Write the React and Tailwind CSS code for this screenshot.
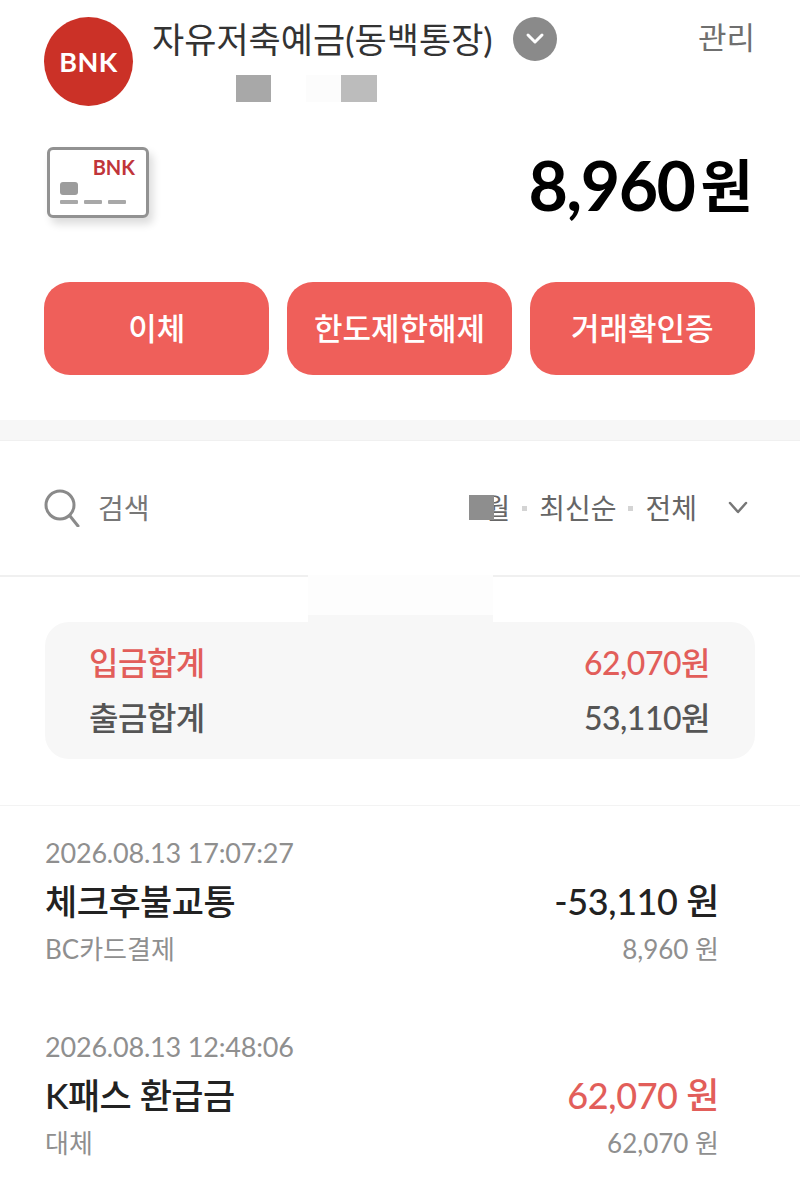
const font = { fontFamily: '"Lato", "Noto Sans CJK KR", sans-serif' };

function BnkMark({ className }) {
  // BNK wordmark, kept as real text
  return (
    <span className={`font-bold leading-none ${className}`}>BNK</span>
  );
}

function ActionButton({ label }) {
  return (
    <button className="flex h-[93px] flex-1 items-center justify-center rounded-[26px] bg-[#ef5f5a] text-[31px] font-medium text-white">
      {label}
    </button>
  );
}

function Transaction({ time, title, amount, amountColor, method, balance }) {
  return (
    <div className="h-[194px] px-[45px] pt-[30px]">
      <div className="text-[27px] leading-[34px] tracking-[-0.2px] text-[#8f8f8f]">{time}</div>
      <div className="mt-[9px] flex items-center justify-between pr-[36px]">
        <span className="text-[35px] leading-[44px] font-medium tracking-[-0.5px] text-[#222222]">{title}</span>
        <span className={`text-[36px] leading-[44px] font-medium tracking-[-0.4px] ${amountColor}`}>{amount}</span>
      </div>
      <div className="mt-[8px] flex items-center justify-between pr-[36px] text-[26px] leading-[36px] text-[#8f8f8f]">
        <span>{method}</span>
        <span>{balance}</span>
      </div>
    </div>
  );
}

export default function App() {
  return (
    <div className="h-[1179px] w-[800px] overflow-hidden bg-white" style={font}>
      {/* account header */}
      <div className="flex px-[44px] pt-[17px]">
        <div className="flex h-[89px] w-[89px] shrink-0 items-center justify-center rounded-full bg-[#cb3127]">
          <BnkMark className="text-[27px] tracking-[0.02em] text-white" />
        </div>
        <div className="ml-[19px] flex-1">
          <div className="flex h-[44px] items-center">
            <span className="text-[35px] leading-[44px] text-[#333333]">자유저축예금(동백통장)</span>
            <span className="ml-[20px] flex h-[44px] w-[44px] items-center justify-center rounded-full bg-[#8a8a8a]">
              <svg width="22" height="14" viewBox="0 0 22 14" fill="none" stroke="#ffffff" strokeWidth="3" strokeLinecap="round" strokeLinejoin="round">
                <path d="M4 3l7 7 7-7" />
              </svg>
            </span>
            <span className="ml-auto mr-[1px] self-start text-[31px] leading-[40px] text-[#6f6f6f]">관리</span>
          </div>
          <div className="mt-[14px] flex h-[27px] pl-[84px]">
            <div className="h-[27px] w-[35px] bg-[#a8a8a8]" />
            <div className="ml-[35px] h-[27px] w-[35px] bg-[#fcfcfc]" />
            <div className="h-[27px] w-[36px] bg-[#bcbcbc]" />
          </div>
        </div>
      </div>

      {/* balance */}
      <div className="mt-[36px] flex h-[84px] items-start justify-between pl-[47px] pr-[47px]">
        <div className="relative mt-[5px] h-[71px] w-[102px] rounded-[6px] border-[3px] border-[#929292] bg-white shadow-[4px_6px_8px_rgba(0,0,0,0.14)]">
          <BnkMark className="absolute right-[11px] top-[7px] text-[20px] text-[#c0353a]" />
          <div className="absolute left-[10px] top-[32px] h-[13px] w-[18px] rounded-[3px] bg-[#9c9c9c]" />
          <div className="absolute left-[10px] top-[50px] flex gap-[6px]">
            <div className="h-[4px] w-[18px] rounded-[1px] bg-[#a8a8a8]" />
            <div className="h-[4px] w-[18px] rounded-[1px] bg-[#a8a8a8]" />
            <div className="h-[4px] w-[18px] rounded-[1px] bg-[#a8a8a8]" />
          </div>
        </div>
        <div className="flex h-[84px] items-center pt-[2px] text-black">
          <span className="text-[68px] leading-[80px] font-bold tracking-[-1.5px]">8,960</span>
          <span className="ml-[6px] text-[57px] leading-[80px] font-bold">원</span>
        </div>
      </div>

      {/* actions */}
      <div className="mt-[56px] flex gap-[17.5px] pl-[44px] pr-[45px]">
        <ActionButton label="이체" />
        <ActionButton label="한도제한해제" />
        <ActionButton label="거래확인증" />
      </div>

      <div className="mt-[45px] h-[21px] border-b border-[#f0f0f0] bg-[#f7f7f7]" />

      {/* search and filter */}
      <div className="flex h-[136px] items-center border-b-2 border-[#f0f0f0] pl-[44px] pr-[52px]">
        <svg width="36" height="38" viewBox="0 0 36 38" fill="none" stroke="#8a8a8a" strokeWidth="3" strokeLinecap="round">
          <circle cx="16" cy="16" r="14" />
          <path d="M26 27l8 10" />
        </svg>
        <span className="ml-[18px] text-[28px] leading-[40px] text-[#777777]">검색</span>
        <div className="relative ml-auto flex items-center text-[28px] leading-[40px] text-[#666666]">
          <span>월</span>
          <span className="absolute left-[-15px] top-[7px] h-[25px] w-[25px] bg-[#8e8e8e]" />
          <span className="mx-[12px] h-[5px] w-[5px] bg-[#d4d4d4]" />
          <span>최신순</span>
          <span className="mx-[12px] h-[5px] w-[5px] bg-[#d4d4d4]" />
          <span>전체</span>
          <svg className="ml-[31px]" width="20" height="14" viewBox="0 0 20 14" fill="none" stroke="#777777" strokeWidth="2.5" strokeLinecap="round" strokeLinejoin="round">
            <path d="M2 2l8 9 8-9" />
          </svg>
        </div>
      </div>

      {/* totals */}
      <div className="relative border-b border-[#f3f3f3] pl-[45px] pr-[45px] pb-[46px] pt-[45px]">
        {/* masked patch over the divider */}
        <div className="absolute left-[308px] top-[-2px] h-[40px] w-[185px] bg-[#fdfdfd]" />
        <div className="absolute left-[308px] top-[38px] h-[8px] w-[185px] bg-[#f7f7f7]" />
        <div className="relative flex h-[137px] flex-col justify-center gap-[11px] rounded-[24px] bg-[#f7f7f7] pl-[44px] pr-[45px]">
          <div className="flex items-center justify-between text-[32px] leading-[44px] font-medium tracking-[-0.5px] text-[#e25e5a]">
            <span>입금합계</span>
            <span>62,070원</span>
          </div>
          <div className="flex items-center justify-between text-[32px] leading-[44px] font-medium tracking-[-0.5px] text-[#555555]">
            <span>출금합계</span>
            <span>53,110원</span>
          </div>
        </div>
      </div>

      {/* transactions */}
      <Transaction
        time="2026.08.13 17:07:27"
        title="체크후불교통"
        amount="-53,110 원"
        amountColor="text-[#222222]"
        method="BC카드결제"
        balance="8,960 원"
      />
      <Transaction
        time="2026.08.13 12:48:06"
        title="K패스 환급금"
        amount="62,070 원"
        amountColor="text-[#e25e5a]"
        method="대체"
        balance="62,070 원"
      />
    </div>
  );
}
